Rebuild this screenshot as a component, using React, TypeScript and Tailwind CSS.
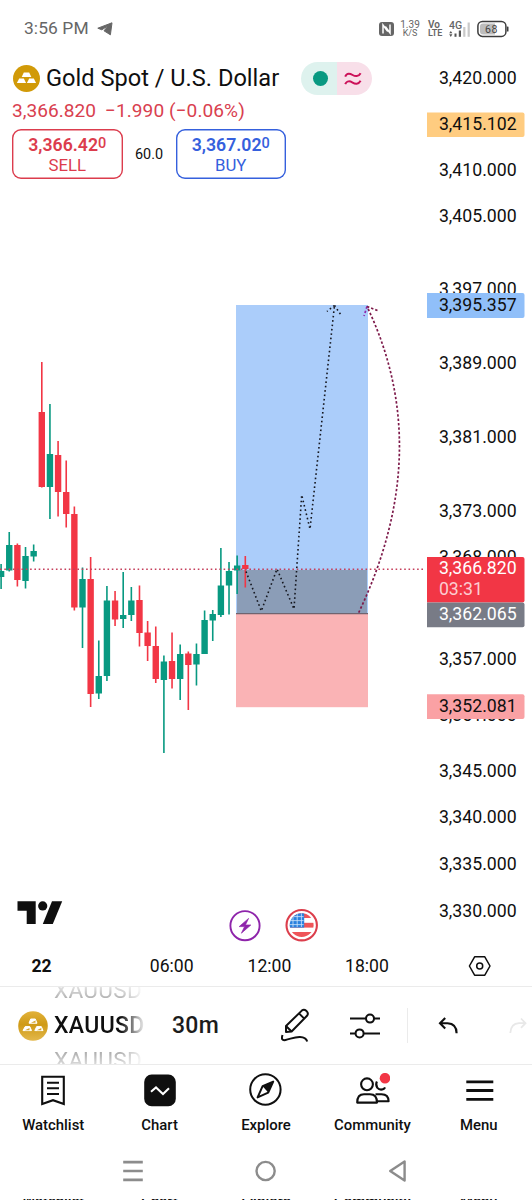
import React from 'react';

type Candle = [up: boolean, high: number, low: number, top: number, bottom: number];

const candles: Candle[] = [
  [true, 564, 589, 571, 577],
  [true, 532, 571.5, 545, 570.5],
  [false, 543.5, 586.5, 545, 580],
  [true, 547, 588.5, 556, 581],
  [true, 544.5, 561.5, 551, 556.5],
  [false, 362, 487.5, 412, 487],
  [true, 404, 519, 454, 487],
  [false, 441, 516.5, 455, 492],
  [false, 460.5, 527.5, 492, 514],
  [false, 506.5, 610.5, 514, 607.5],
  [true, 567.5, 648, 579, 607.5],
  [false, 557, 707, 579, 694],
  [true, 640.5, 699, 676, 693.5],
  [true, 586, 681, 600.5, 676],
  [false, 591, 626, 600.5, 619.5],
  [true, 572, 628, 615, 619],
  [true, 587, 621, 600.5, 615],
  [false, 585.5, 646.5, 600, 633],
  [false, 621, 661, 632.5, 646],
  [false, 626.5, 683, 646, 679],
  [true, 655.5, 753, 661.5, 680],
  [false, 632.5, 688.5, 661, 679],
  [true, 644.5, 700, 654, 679],
  [false, 651.5, 710, 653.5, 665],
  [true, 643.5, 685.5, 654, 664.5],
  [true, 610.5, 654, 620, 654],
  [true, 610, 641, 614, 620.5],
  [true, 548, 617, 585.5, 615],
  [true, 562, 614.5, 571, 585.5],
  [true, 555.5, 594, 565.5, 570.5],
  [false, 556, 587.5, 565, 569],
];

const ticks: [string, number][] = [
  ['3,420.000', 84.3],
  ['3,410.000', 176.3],
  ['3,405.000', 221.8],
  ['3,397.000', 295.3],
  ['3,389.000', 368.6],
  ['3,381.000', 442.6],
  ['3,373.000', 516.6],
  ['3,368.000', 562.5],
  ['3,357.000', 665.3],
  ['3,351.000', 720.8],
  ['3,345.000', 777],
  ['3,340.000', 823.2],
  ['3,335.000', 870],
  ['3,330.000', 916.8],
];

const tags = [
  { label: '3,415.102', top: 112.5, height: 24.5, base: 129.9, fill: '#ffcc80', color: '#0f0f0f' },
  { label: '3,395.357', top: 293, height: 25, base: 310.6, fill: '#90bff9', color: '#0f0f0f' },
  { label: '3,366.820', top: 557, height: 45.5, base: 573.8, fill: '#f23645', color: '#ffffff' },
  { label: '3,362.065', top: 602.5, height: 24.8, base: 619.8, fill: '#787b86', color: '#ffffff' },
  { label: '3,352.081', top: 694.3, height: 24.7, base: 711.5, fill: '#faa1a4', color: '#0f0f0f' },
];

const times: [string, number, number][] = [
  ['22', 41.5, 700],
  ['06:00', 171.7, 400],
  ['12:00', 269.5, 400],
  ['18:00', 367, 400],
];

const StatusBar: React.FC = () => (
  <div className="flex h-[58px] items-center justify-between pr-[23px] pl-[24px] text-[#666666]">
    <div className="flex items-center gap-2">
      <span className="text-[17.4px] leading-none tracking-[0.1px]">3:56 PM</span>
      <svg width="16" height="14" viewBox="0 0 16 14">
        <path d="M15 0.8 L0.8 6.2 L4.8 7.8 L11.4 3.6 L7 8.8 L13.4 12.8 Z" fill="#666666" stroke="#666666" strokeLinejoin="round" />
      </svg>
    </div>
    <div className="flex items-center">
      <svg width="15" height="14" viewBox="0 0 15 14">
        <rect x="0" y="0" width="15" height="14" rx="3" fill="#666666" />
        <path d="M4 11.5 V3 L8.8 9.5 M6.3 4.5 L11 11 V2.5" fill="none" stroke="#fff" strokeWidth="1.5" />
      </svg>
      <div className="ml-[6px] flex w-[20px] flex-col items-center text-[10px] leading-[9px]">
        <span>1.39</span>
        <span className="text-[9px]">K/S</span>
      </div>
      <div className="ml-[8px] flex w-[17px] flex-col items-start text-[10px] leading-[9px] font-semibold">
        <span>Vo</span>
        <span className="text-[9px]">LTE</span>
      </div>
      <div className="ml-[4px] flex w-[22px] flex-col items-start">
        <svg width="22" height="18" viewBox="0 0 22 18">
          <text x="0" y="8.6" fontSize="10.5" fontWeight="500" fill="#666666">4G</text>
          <g fill="#555555">
            <path d="M1.8 11 L3.4 13.3 H0.2 Z M1.8 17 L3.4 14.3 H0.2 Z" />
            <rect x="5.5" y="13.5" width="2" height="3.3" />
            <rect x="9.8" y="10.5" width="2.2" height="6.3" />
          </g>
          <rect x="14.2" y="7" width="2.2" height="9.8" fill="#c9c9c9" />
          <rect x="18.6" y="2.5" width="2.2" height="14.3" fill="#c9c9c9" />
        </svg>
      </div>
      <svg className="ml-[6px]" width="32" height="18" viewBox="0 0 32 18">
        <rect x="0.9" y="1.4" width="28" height="15" rx="4.5" fill="none" stroke="#3c3c3c" strokeWidth="1.5" />
        <path d="M6 3.4 H18 V14.4 H6 Q3 14.4 3 11.4 V6.4 Q3 3.4 6 3.4 Z" fill="#bdbdbd" />
        <rect x="29.9" y="6.5" width="1.6" height="5" rx="0.6" fill="#3c3c3c" />
        <text x="14.4" y="12.6" fontSize="10.5" letterSpacing="0.6" textAnchor="middle" fill="#444444">68</text>
      </svg>
    </div>
  </div>
);

const GoldBars: React.FC = () => (
  <svg width="27" height="27" viewBox="0 0 27 27">
    <circle cx="13.5" cy="13.5" r="13.5" fill="#d19a08" />
    <g fill="#fff">
      <path d="M10.8 7.5 H16.2 L18.3 12.1 H8.7 Z" />
      <path d="M6.2 13.5 H10.8 L13.1 18 H3.9 Z" />
      <path d="M16.2 13.5 H20.8 L23.1 18 H13.9 Z" />
    </g>
  </svg>
);

const QuoteButton: React.FC<{ price: string; side: string; className: string }> = ({ price, side, className }) => (
  <button className={`flex h-[50px] w-[110.5px] flex-col items-center justify-center rounded-[9px] pt-[2px] ${className}`}>
    <span className="flex items-start text-[17.7px] leading-[20px] font-semibold">
      {price}
      <span className="text-[14.5px] leading-[17px] font-medium">0</span>
    </span>
    <span className="text-[16.8px] leading-[20px]">{side}</span>
  </button>
);

const SymbolHeader: React.FC = () => (
  <div className="h-[132px] px-3 pt-1">
    <div className="flex h-[33px] items-center pl-px">
      <GoldBars />
      <h1 className="ml-[6px] w-[255px] text-[23.6px] leading-none whitespace-nowrap text-[#0f0f0f]">Gold Spot / U.S. Dollar</h1>
      <div className="flex h-[33px] w-[71px] overflow-hidden rounded-full">
        <div className="flex w-[36px] items-center justify-center bg-[#def2ee] pl-[2px]">
          <span className="size-[15px] rounded-full bg-[#089981]"></span>
        </div>
        <div className="flex flex-1 items-center justify-center bg-[#f8dfe9] pr-[3px]">
          <svg width="18" height="14" viewBox="0 0 18 14" fill="none" stroke="#cc1159" strokeWidth="2">
            <path d="M1.2 4.6 C3 0.6 6.2 1.6 8.6 3 C11 4.4 14.5 5 16.6 1.2" />
            <path d="M1.2 12.2 C3 8.2 6.2 9.2 8.6 10.6 C11 12 14.5 12.6 16.6 8.8" />
          </svg>
        </div>
      </div>
    </div>
    <div className="flex h-[30px] items-center gap-[9px] pt-[1.5px] text-[19.1px] leading-none whitespace-nowrap text-[#d9404f]">
      <span>3,366.820</span>
      <span className="tracking-[0.07px]">−1.990 (−0.06%)</span>
    </div>
    <div className="mt-[3.5px] flex items-center">
      <QuoteButton price="3,366.42" side="SELL" className="text-[#dc3c4d] shadow-[inset_0_0_0_1.4px_#dc3c4d]" />
      <span className="w-[53px] pt-[2px] text-center text-[14.4px] text-[#0f0f0f]">60.0</span>
      <QuoteButton price="3,367.02" side="BUY" className="text-[#3560dd] shadow-[inset_0_0_0_1.4px_#3560dd]" />
    </div>
  </div>
);

const PricePlot: React.FC = () => (
  <svg width="427" height="755" viewBox="0 190 427 755" className="block">
    {/* Long position */}
    <rect x="236" y="305" width="132" height="309" fill="#abcdfa" />
    <rect x="237" y="570" width="130" height="43.5" fill="#8b9db7" />
    <rect x="236" y="614" width="132" height="93.2" fill="#fab3b5" />
    <path d="M236 613.7 H368" stroke="#6f6470" strokeWidth="1.2" />

    {candles.map(([up, high, low, top, bottom], i) => {
      const x = 1.1 + i * 8.14;
      return (
        <g key={i} fill={up ? '#089981' : '#f23645'}>
          <rect x={x - 0.8} y={high} width="1.6" height={low - high} />
          <rect x={x - 3.2} y={top} width="6.4" height={bottom - top} />
        </g>
      );
    })}

    <path d="M0 569.3 H424" stroke="#c5405c" strokeWidth="1.5" strokeDasharray="1.6 2.7" />

    {/* Projected path */}
    <g fill="none" stroke="#15171f" strokeWidth="1.6" strokeDasharray="1.6 2.8">
      <path d="M246 571.5 L261.3 611 L277 569 L294 609 L301.7 495 L310 529 L334.5 305.5" />
      <path d="M334.5 305.5 L327 311.5" />
      <path d="M334.5 305.5 L341 315" />
    </g>
    <g fill="none" stroke="#7d1a4a" strokeWidth="1.7" strokeDasharray="2.4 2">
      <path d="M358.7 612.7 Q435.8 450 367 306.5" />
      <path d="M367 306.5 L364 316" stroke="#8e24aa" />
      <path d="M367 306.5 L377.5 310.5" />
    </g>

    {/* Logo */}
    <g fill="#0f0f0f">
      <path d="M17.5 901.3 H35.7 V924 H26.7 V910.7 H17.5 Z" />
      <circle cx="42.7" cy="905.9" r="4.6" />
      <path d="M52 901.3 H62.2 L52.8 924 H42.8 Z" />
    </g>

    {/* Event markers */}
    <circle cx="245" cy="925.7" r="14.6" fill="#fff" stroke="#8e24aa" strokeWidth="1.9" />
    <path d="M248.6 918.4 L239.2 926.6 H244.6 L241.4 933.2 L250.8 925 H245.4 Z" fill="#8e24aa" stroke="#8e24aa" strokeWidth="0.7" strokeLinejoin="round" />
    <clipPath id="flag">
      <circle cx="301.7" cy="925.2" r="11.9" />
    </clipPath>
    <circle cx="301.7" cy="925.2" r="15.2" fill="#fff" stroke="#dc3e4c" strokeWidth="2.1" />
    <g clipPath="url(#flag)">
      <rect x="289" y="913" width="26" height="25" fill="#fff" />
      <rect x="289" y="913" width="26" height="5" fill="#ef5559" />
      <rect x="289" y="922.8" width="26" height="4.8" fill="#ef5559" />
      <rect x="289" y="932" width="26" height="6" fill="#ef5559" />
      <rect x="289" y="913" width="15.2" height="14.6" fill="#2a81de" />
      <path
        d="M293 913 V927 M297.2 913 V927 M301.4 913 V927 M289 916.6 H303.6 M289 920.6 H303.6 M289 924.6 H303.6"
        stroke="#cfe3f9"
        strokeWidth="0.8"
      />
    </g>
  </svg>
);

const PriceAxis: React.FC = () => (
  <svg width="105" height="887" viewBox="427 58 105 887" className="block" fontSize="17.7">
    {ticks.map(([label, y]) => (
      <text key={label} x="438.9" y={y} fill="#0f0f0f">
        {label}
      </text>
    ))}
    {tags.map(({ label, top, height, base, fill, color }) => (
      <g key={label}>
        <path d={`M427 ${top} h95.5 q2 0 2 2 v${height - 4} q0 2 -2 2 h-95.5 z`} fill={fill} />
        <text x="438.9" y={base} fill={color}>
          {label}
        </text>
      </g>
    ))}
    <text x="438.9" y="594.6" fill="#fccdd1">
      03:31
    </text>
  </svg>
);

const TimeAxis: React.FC = () => (
  <div className="flex h-[41px] items-center">
    <svg width="427" height="41" viewBox="0 945 427 41" fontSize="17.6" textAnchor="middle" fill="#0f0f0f">
      {times.map(([label, x, weight]) => (
        <text key={label} x={x} y="971.8" fontWeight={weight}>
          {label}
        </text>
      ))}
    </svg>
    <div className="flex flex-1 justify-center">
      <svg width="24" height="22" viewBox="0 0 24 22" fill="none" stroke="#0f0f0f" strokeWidth="1.5">
        <path d="M6.6 1.8 H16.8 L22 11 L16.8 20.2 H6.6 L1.4 11 Z" strokeLinejoin="round" />
        <circle cx="11.7" cy="11" r="3" />
      </svg>
    </div>
  </div>
);

const Toolbar: React.FC = () => (
  <div className="flex h-[79px] items-center overflow-hidden border-y border-[#ebebeb]">
    <svg className="ml-[17.5px] shrink-0" width="30" height="30" viewBox="0 0 30 30">
      <defs>
        <linearGradient id="gold" x1="0" y1="0" x2="0" y2="1">
          <stop offset="0" stopColor="#e2b23a" />
          <stop offset="0.45" stopColor="#cf9a16" />
          <stop offset="1" stopColor="#e3b84c" />
        </linearGradient>
      </defs>
      <circle cx="15" cy="15" r="14.8" fill="url(#gold)" />
      <g fill="#fff" stroke="#fff" strokeLinejoin="round">
        <path d="M12.7 8 H17.3 L19 12.2 H11 Z" />
        <path d="M7.2 15.6 H11.8 L13.5 19.6 H5 Z" />
        <path d="M18.7 15.6 H23.3 L25 19.6 H16.8 Z" />
      </g>
      <path d="M13 11.7 L17.5 9.5 V11.7 Z M7 19.2 L11.5 17 V19.2 Z M18.8 19.2 L23.3 17 V19.2 Z" fill="#d5a52c" />
    </svg>
    <div className="ml-[6.5px] flex h-[77px] w-[92px] shrink-0 flex-col justify-center overflow-hidden [mask-image:linear-gradient(to_right,#000_72%,transparent)]">
      <span className="h-[35px] shrink-0 text-[22.6px] leading-[35px] tracking-[0.3px] text-[#a6a6a6] [mask-image:linear-gradient(to_top,#000_20%,transparent_80%)]">XAUUSD</span>
      <span className="h-[35px] shrink-0 text-[23px] leading-[36px] font-medium tracking-[0.35px] text-[#0f0f0f]">XAUUSD</span>
      <span className="h-[35px] shrink-0 text-[22.6px] leading-[35px] tracking-[0.3px] text-[#a6a6a6] [mask-image:linear-gradient(to_bottom,#000_20%,transparent_90%)]">XAUUSD</span>
    </div>
    <span className="ml-[26px] w-[49px] shrink-0 pt-[2px] text-[23px] font-medium tracking-[0.3px] text-[#1c1c1c]">30m</span>
    <svg className="ml-[59.5px] shrink-0" width="29" height="35" viewBox="0 0 29 35" fill="none" stroke="#0f0f0f" strokeWidth="2" strokeLinejoin="round">
      <path d="M5 24 V18 L20.8 2.6 Q23 0.8 25.2 2.8 L25.8 3.4 Q27.8 5.6 26 7.8 L10.6 23.5 Z" />
      <path d="M5 18 L10.6 23.5 M18 5.4 L23.3 10.6" />
      <path d="M1.5 27 Q-0.5 33 4.5 32 C10 30.8 13.5 28.8 19 29 Q25 29.2 26.2 33.5" />
    </svg>
    <svg className="ml-[40px] shrink-0" width="30" height="28" viewBox="0 0 30 28" stroke="#0f0f0f" strokeWidth="2">
      <path d="M0 6.6 H30 M0 21.4 H30" />
      <circle cx="20" cy="6.6" r="4" fill="#fff" />
      <circle cx="9.6" cy="21.4" r="4" fill="#fff" />
    </svg>
    <div className="ml-[27px] h-[35px] w-px shrink-0 bg-[#ebebeb]"></div>
    <svg className="ml-[30.5px] shrink-0" width="21" height="18" viewBox="0 0 21 18" fill="none" stroke="#0f0f0f" strokeWidth="2.1">
      <path d="M7.2 1 L2 6.2 L7.2 11.4 M2.2 6.2 H9.5 Q18.6 6.6 18.6 16.2" />
    </svg>
    <svg className="ml-[50px] shrink-0" width="21" height="18" viewBox="0 0 21 18" fill="none" stroke="#e8e8e8" strokeWidth="1.8">
      <path d="M12 1.5 L16.5 6.2 L12 10.9 M16.5 6.2 H10 Q1.8 6.6 1.3 16" />
    </svg>
  </div>
);

const WatchlistIcon: React.FC = () => (
  <svg width="32" height="34" viewBox="0 0 32 34" fill="none" stroke="#0f0f0f" strokeWidth="2.1">
    <path d="M5.2 3.8 H26.8 V31 L16 27.2 L5.2 31 Z" />
    <path d="M10 9.8 H22 M10 15.3 H22 M10 21 H22" />
  </svg>
);

const ChartIcon: React.FC = () => (
  <svg width="32" height="34" viewBox="0 0 32 34">
    <rect x="0.2" y="1.5" width="31.6" height="31.8" rx="7.5" fill="#0f0f0f" />
    <path d="M7 18.8 L12 14.4 L19 21 L25 15.2" fill="none" stroke="#fff" strokeWidth="2" />
  </svg>
);

const ExploreIcon: React.FC = () => (
  <svg width="34" height="34" viewBox="0 0 34 34">
    <circle cx="16.4" cy="16.5" r="15.2" fill="none" stroke="#0f0f0f" strokeWidth="2" />
    <path d="M24.2 8.6 L13.6 13.2 L8.6 24.4 L19.2 19.6 Z" fill="none" stroke="#0f0f0f" strokeWidth="2" strokeLinejoin="round" />
    <path d="M24.2 8.6 L13.6 13.2 L19.2 19.6 Z" fill="#0f0f0f" />
  </svg>
);

const CommunityIcon: React.FC = () => (
  <svg width="36" height="34" viewBox="0 0 36 34" fill="none" stroke="#0f0f0f" strokeWidth="2.1">
    <circle cx="13" cy="11.3" r="5.9" />
    <path d="M3.2 29.6 Q3.2 21.2 10 21.2 H16 Q23 21.2 23 29.6 Z" strokeLinejoin="round" />
    <path d="M21.5 21.2 H27.5 Q34.6 21.2 34.6 28.3 H23" strokeLinejoin="round" />
    <path d="M22.9 8.5 Q21.3 11.5 23.2 14.6 Q25.8 17.6 29.5 16 Q30.6 15.4 31 14.3" />
    <circle cx="31" cy="5.2" r="5.3" fill="#f23645" stroke="none" />
  </svg>
);

const MenuIcon: React.FC = () => (
  <svg width="32" height="34" viewBox="0 0 32 34" stroke="#0f0f0f" strokeWidth="2.8">
    <path d="M3.3 8.8 H30.3 M3.3 17.5 H30.3 M3.3 26.4 H30.3" />
  </svg>
);

const tabs = [
  { label: 'Watchlist', Icon: WatchlistIcon },
  { label: 'Chart', Icon: ChartIcon },
  { label: 'Explore', Icon: ExploreIcon },
  { label: 'Community', Icon: CommunityIcon },
  { label: 'Menu', Icon: MenuIcon },
];

const TabBar: React.FC = () => (
  <nav className="flex h-[76px] pt-[8px]">
    {tabs.map(({ label, Icon }) => (
      <div key={label} className="flex flex-1 basis-0 flex-col items-center text-[#0f0f0f]">
        <Icon />
        <span className="mt-[8px] text-[14.9px] leading-[20px] font-medium">{label}</span>
      </div>
    ))}
  </nav>
);

const SystemNav: React.FC = () => (
  <div className="flex h-[57px] items-center justify-between pr-[124px] pl-[122px] pt-[2px]">
    <svg width="22" height="24" viewBox="0 0 22 24" stroke="#8c8c8c" strokeWidth="2.7">
      <path d="M1.2 3.1 H20.8 M1.2 12 H20.8 M1.2 20.8 H20.8" />
    </svg>
    <svg width="24" height="24" viewBox="0 0 24 24" fill="none" stroke="#8c8c8c" strokeWidth="2.4">
      <circle cx="11.6" cy="12" r="9.1" />
    </svg>
    <svg width="20" height="24" viewBox="0 0 20 24" fill="none" stroke="#8c8c8c" strokeWidth="2.4" strokeLinejoin="round">
      <path d="M16.6 2.4 V21.6 L2.2 12 Z" />
    </svg>
  </div>
);

export default function App() {
  return (
    <div className="h-[1200px] w-[532px] overflow-hidden bg-white font-[Roboto,sans-serif]">
      <StatusBar />
      <div className="flex">
        <div className="w-[427px]">
          <SymbolHeader />
          <PricePlot />
        </div>
        <PriceAxis />
      </div>
      <TimeAxis />
      <Toolbar />
      <TabBar />
      <SystemNav />
      {/* Tab labels peeking out under the system bar */}
      <div className="mt-[1px] flex h-[2px] items-start overflow-hidden">
        {tabs.map(({ label }) => (
          <span key={label} className="-mt-[8px] flex-1 basis-0 text-center text-[14.9px] leading-[20px] font-medium text-[#0f0f0f]">
            {label}
          </span>
        ))}
      </div>
    </div>
  );
}
